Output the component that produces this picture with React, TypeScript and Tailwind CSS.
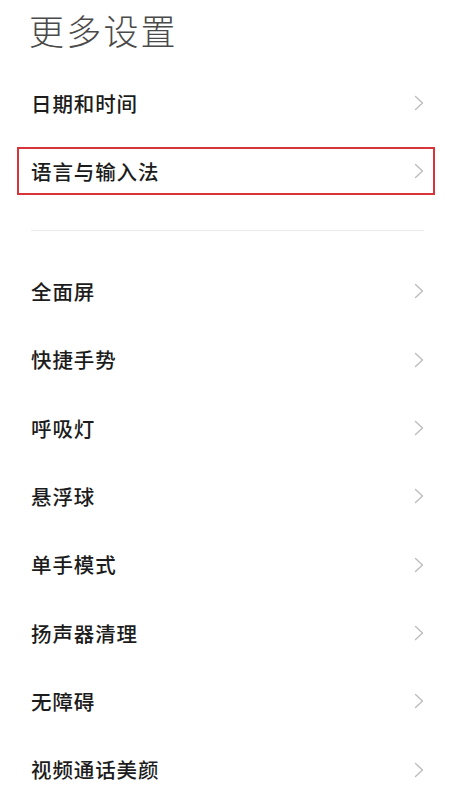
const topItems = ["日期和时间", "语言与输入法"];
const items = ["全面屏", "快捷手势", "呼吸灯", "悬浮球", "单手模式", "扬声器清理", "无障碍", "视频通话美颜"];

function Chevron() {
  return (
    <svg width="10" height="16" viewBox="0 0 10 16" fill="none" className="shrink-0">
      <polyline points="1.5,1.5 8.5,8 1.5,14.5" stroke="#bdbdbd" strokeWidth="1.4" strokeLinejoin="round" strokeLinecap="round" />
    </svg>
  );
}

function Row({ label }: { label: string }) {
  return (
    <div className="flex h-[68.3px] items-center justify-between pl-[31px] pr-[26px]">
      <span className="text-[20.5px] font-medium tracking-[0.9px] text-[#1c1c1c]">{label}</span>
      <Chevron />
    </div>
  );
}

export default function App() {
  return (
    <div className="min-h-[800px] w-[450px] overflow-hidden bg-white" style={{ fontFamily: '"Noto Sans CJK SC", "Noto Sans", sans-serif' }}>
      {/* Title */}
      <div className="flex h-[69px] items-start px-[29px] pt-[6px]">
        <h1 className="text-[35px] font-light leading-[48px] tracking-[2.2px] text-[#4a4a4a]">更多设置</h1>
      </div>

      <Row label={topItems[0]} />

      {/* Highlighted row */}
      <div className="flex h-[68px] items-center pl-[17px] pr-[15px]">
        <div className="flex h-[48px] flex-1 items-center justify-between border-2 border-[#d8343c] pl-[12px] pr-[9px]">
          <span className="text-[20.5px] font-medium tracking-[0.9px] text-[#1c1c1c]">{topItems[1]}</span>
          <Chevron />
        </div>
      </div>

      {/* Divider */}
      <div className="ml-[31px] mr-[26px] mt-[25px] mb-[26px] h-px bg-[#ececec]" />

      {items.map(label => (
        <Row key={label} label={label} />
      ))}
    </div>
  );
}
